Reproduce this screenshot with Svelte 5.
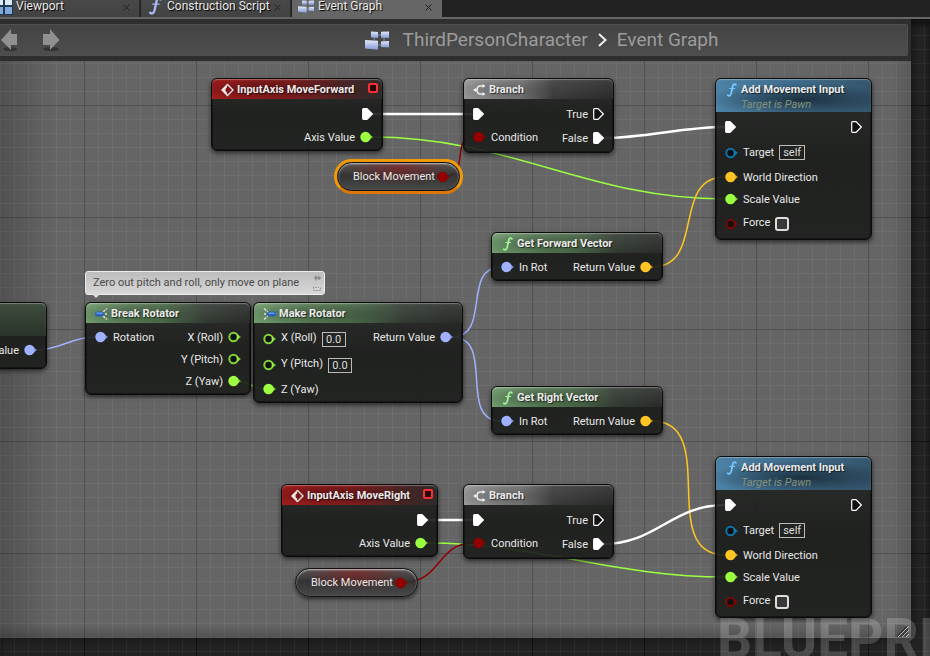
<script lang="ts">
	type PinKind = 'exec' | 'float' | 'rotator' | 'vector' | 'bool' | 'object';

	interface Pin {
		kind: PinKind;
		label?: string;
		linked?: boolean;
		value?: string;
		self?: boolean;
		check?: boolean;
	}

	interface GraphNode {
		id: string;
		title: string;
		subtitle?: string;
		theme: 'event' | 'flow' | 'pure' | 'call';
		icon: 'event' | 'branch' | 'break' | 'make' | 'function' | 'none';
		x: number;
		y: number;
		width: number;
		inputs: Pin[];
		outputs: Pin[];
	}

	interface Wire {
		kind: PinKind;
		from: [number, number];
		to: [number, number];
	}

	const colors: Record<PinKind, string> = {
		exec: '#ffffff',
		float: '#9cff41',
		rotator: '#9fb1ff',
		vector: '#ffc523',
		bool: '#920101',
		object: '#0c87cc',
	};

	const tabs = [
		{ title: 'Viewport', icon: 'viewport' },
		{ title: 'Construction Script', icon: 'function' },
		{ title: 'Event Graph', icon: 'graph' },
	];

	let active = $state('Event Graph');

	const eventNode = (id: string, title: string, x: number, y: number, width: number): GraphNode => ({
		id, title, theme: 'event', icon: 'event', x, y, width,
		inputs: [],
		outputs: [
			{ kind: 'exec', linked: true },
			{ kind: 'float', label: 'Axis Value', linked: true },
		],
	});

	const branchNode = (id: string, x: number, y: number): GraphNode => ({
		id, title: 'Branch', theme: 'flow', icon: 'branch', x, y, width: 151,
		inputs: [
			{ kind: 'exec', linked: true },
			{ kind: 'bool', label: 'Condition', linked: true },
		],
		outputs: [
			{ kind: 'exec', label: 'True' },
			{ kind: 'exec', label: 'False', linked: true },
		],
	});

	const vectorNode = (id: string, title: string, x: number, y: number): GraphNode => ({
		id, title, theme: 'pure', icon: 'function', x, y, width: 172,
		inputs: [{ kind: 'rotator', label: 'In Rot', linked: true }],
		outputs: [{ kind: 'vector', label: 'Return Value', linked: true }],
	});

	const moveNode = (id: string, x: number, y: number): GraphNode => ({
		id, title: 'Add Movement Input', subtitle: 'Target is Pawn', theme: 'call', icon: 'function', x, y, width: 157,
		inputs: [
			{ kind: 'exec', linked: true },
			{ kind: 'object', label: 'Target', self: true },
			{ kind: 'vector', label: 'World Direction', linked: true },
			{ kind: 'float', label: 'Scale Value', linked: true },
			{ kind: 'bool', label: 'Force', check: true },
		],
		outputs: [{ kind: 'exec' }],
	});

	const nodes: GraphNode[] = [
		{
			id: 'yaw', title: '', subtitle: ' ', theme: 'pure', icon: 'none', x: -113, y: 283, width: 160,
			inputs: [],
			outputs: [{ kind: 'rotator', label: 'Return Value', linked: true }],
		},
		eventNode('forward', 'InputAxis MoveForward', 211, 59, 172),
		branchNode('branch-1', 463, 59),
		moveNode('move-1', 715, 59),
		vectorNode('fwd-vector', 'Get Forward Vector', 491, 213),
		{
			id: 'break', title: 'Break Rotator', theme: 'pure', icon: 'break', x: 85, y: 283, width: 166,
			inputs: [{ kind: 'rotator', label: 'Rotation', linked: true }],
			outputs: [
				{ kind: 'float', label: 'X (Roll)' },
				{ kind: 'float', label: 'Y (Pitch)' },
				{ kind: 'float', label: 'Z (Yaw)', linked: true },
			],
		},
		{
			id: 'make', title: 'Make Rotator', theme: 'pure', icon: 'make', x: 253, y: 283, width: 210,
			inputs: [
				{ kind: 'float', label: 'X (Roll)', value: '0.0' },
				{ kind: 'float', label: 'Y (Pitch)', value: '0.0' },
				{ kind: 'float', label: 'Z (Yaw)', linked: true },
			],
			outputs: [{ kind: 'rotator', label: 'Return Value', linked: true }],
		},
		vectorNode('right-vector', 'Get Right Vector', 491, 367),
		eventNode('right', 'InputAxis MoveRight', 281, 465, 157),
		branchNode('branch-2', 463, 465),
		moveNode('move-2', 715, 437),
	];

	const variables = [
		{ id: 'block-1', x: 337, y: 143, selected: true },
		{ id: 'block-2', x: 295, y: 549, selected: false },
	];

	const wires: Wire[] = [
		{ kind: 'exec', from: [373, 95], to: [473, 95] },
		{ kind: 'exec', from: [603, 119], to: [725, 108] },
		{ kind: 'float', from: [372, 118], to: [725, 180] },
		{ kind: 'bool', from: [447, 157], to: [473, 118] },
		{ kind: 'rotator', from: [36, 331], to: [95, 318] },
		{ kind: 'float', from: [240, 363], to: [264, 370] },
		{ kind: 'rotator', from: [452, 318], to: [501, 248] },
		{ kind: 'rotator', from: [452, 318], to: [501, 402] },
		{ kind: 'vector', from: [652, 248], to: [725, 158] },
		{ kind: 'vector', from: [652, 402], to: [725, 536] },
		{ kind: 'exec', from: [427, 501], to: [473, 501] },
		{ kind: 'exec', from: [603, 525], to: [725, 486] },
		{ kind: 'float', from: [427, 524], to: [725, 558] },
		{ kind: 'bool', from: [405, 563], to: [473, 524] },
	];

	// Tangents grow with the distance between both ends
	function wirePath({ from: [x1, y1], to: [x2, y2] }: Wire) {
		const reach = (Math.abs(x2 - x1) + Math.abs(y2 - y1)) / 3;
		return `M${x1} ${y1}C${x1 + reach} ${y1} ${x2 - reach} ${y2} ${x2} ${y2}`;
	}
</script>

{#snippet graphIcon()}
	<svg class="graph-icon" viewBox="0 0 24 19" aria-hidden="true">
		<defs>
			<linearGradient id="graph-fill" x1="0" y1="0" x2="0" y2="1">
				<stop offset="0" stop-color="#e4e9fb" />
				<stop offset="1" stop-color="#8399d6" />
			</linearGradient>
		</defs>
		<path d="M11 4h8M9 9l1-4M13 14h5M19 5v8" stroke="#8b8f9c" fill="none" />
		<g fill="url(#graph-fill)">
			<path d="M6 .5l7 .4v6L6 6.600z" />
			<path d="M16 .8l8-.3v6.500l-8-.2z" />
			<path d="M0 9l13 .8v9L0 17.500z" />
			<path d="M16 10.500l8-.5v6.500l-8-.5z" />
		</g>
	</svg>
{/snippet}

{#snippet functionIcon()}
	<svg class="fn-icon" viewBox="0 0 13 16" aria-hidden="true">
		<path d="M11.500 2.200C10 .5 8.400 1.400 7.800 4L6.200 11.500C5.600 14.200 4 15.400 2.200 14" />
		<path class="thin" d="M4.500 6.300h5.600" />
	</svg>
{/snippet}

{#snippet pinIcon(pin: Pin)}
	{#if pin.kind === 'exec'}
		<svg class="pin exec" viewBox="0 0 11 12" aria-hidden="true">
			<path
				d="M1.500 .7H5L10.300 6L5 11.300H1.500Q.7 11.300 .7 10.500V1.500Q.7 .7 1.500 .7Z"
				fill={pin.linked ? '#fff' : '#111'}
				stroke="#fff"
				stroke-width="1.200"
			/>
		</svg>
	{:else}
		<svg class="pin" viewBox="0 0 13 12" aria-hidden="true">
			<path d="M9 3L13 6L9 9Z" fill={colors[pin.kind]} opacity="0.75" />
			<circle
				cx="5.500"
				cy="6"
				r="4.200"
				fill={pin.linked ? colors[pin.kind] : '#0c0e0c'}
				stroke={colors[pin.kind]}
				stroke-width="2"
				opacity={pin.linked ? 1 : 0.8}
			/>
		</svg>
	{/if}
{/snippet}

<div class="editor">
	<nav class="tabs">
		{#each tabs as tab}
			<div class="tab" class:active={active === tab.title}>
				<button class="tab-main" onclick={() => (active = tab.title)}>
					<span class="tab-icon">
						{#if tab.icon === 'viewport'}
							<svg viewBox="0 0 18 18" aria-hidden="true">
								<path d="M0 0h18v18H0z" fill="#1f3a52" />
								<path d="M1 1h7v7H1zM10 1h7v7h-7z" fill="#dcecf2" />
								<path d="M1 10h7v7H1zM10 10h7v7h-7z" fill="#7fa8dc" />
							</svg>
						{:else if tab.icon === 'function'}
							{@render functionIcon()}
						{:else}
							{@render graphIcon()}
						{/if}
					</span>
					{tab.title}
				</button>
				<button class="close" aria-label="Close {tab.title}">
					<svg viewBox="0 0 7 7" aria-hidden="true"><path d="M.5 .5l6 6M6.500 .5l-6 6" /></svg>
				</button>
			</div>
		{/each}
	</nav>

	<main class="graph">
		<div class="sheet">
			<header class="crumbs">
				<div class="crumb-bar">
					<button class="history" aria-label="Back">
						<svg viewBox="0 0 18 24" aria-hidden="true">
							<ellipse cx="10" cy="21" rx="7" ry="2" fill="#333" />
							<path d="M1 12L11 1V6H17V17H11V22Z" fill="#8e918e" />
						</svg>
					</button>
					<button class="history" aria-label="Forward">
						<svg viewBox="0 0 18 24" aria-hidden="true">
							<ellipse cx="9" cy="21" rx="8" ry="2" fill="#333" />
							<path d="M17.500 12L8 1V6H1V17H8V22Z" fill="#8e918e" />
						</svg>
					</button>
					<div class="path">
						{@render graphIcon()}
						<a href="#character">ThirdPersonCharacter</a>
						<svg class="chevron" viewBox="0 0 9 14" aria-hidden="true"><path d="M1 1L7.500 7L1 13" /></svg>
						<a href="#graph">Event Graph</a>
					</div>
				</div>
			</header>
			<svg class="grip" viewBox="0 0 12 12" aria-hidden="true">
				<path d="M0 12L12 0M4 12L12 4M8 12L12 8" stroke="#333" stroke-width="2" />
				<path d="M1 12L12 1M5 12L12 5M9 12L12 9" stroke="#bbb" />
			</svg>
		</div>

		<svg class="wires" aria-hidden="true">
			{#each wires as wire}
				<path d={wirePath(wire)} stroke={colors[wire.kind]} class:thick={wire.kind === 'exec'} />
			{/each}
		</svg>

		{#each nodes as node (node.id)}
			<section class="node {node.theme}" style="left: {node.x}px; top: {node.y}px; width: {node.width}px;">
				<div class="head" class:tall={node.subtitle}>
					<span class="head-icon">
						{#if node.icon === 'function'}
							{@render functionIcon()}
						{:else if node.icon === 'event'}
							<svg viewBox="0 0 13 14" aria-hidden="true">
								<path d="M6.500 1.500L12 7L6.500 12.500L1 7Z" fill="none" stroke="#f1dede" stroke-width="1.400" />
								<path d="M6 1.500L.5 7L6 12.500V9.800L4.500 8V6L6 4.200Z" fill="#f6eaea" />
							</svg>
						{:else if node.icon === 'branch'}
							<svg viewBox="0 0 13 14" aria-hidden="true">
								<path d="M10 3H7.500Q4 3 4 7T7.500 11H10M1 7h3" fill="none" stroke="#eee" stroke-width="1.500" />
								<path d="M9.500 1l3 2-3 2zM9.500 9l3 2-3 2zM3 5L0 7l3 2z" fill="#eee" />
							</svg>
						{:else if node.icon === 'break'}
							<svg viewBox="0 0 13 14" aria-hidden="true">
								<path d="M8 5l4-3.500M10 7h2M8 9l4 3.500" stroke="#ddd" stroke-width="1.500" stroke-dasharray="3 1" />
								<rect x="0" y="4.500" width="9" height="5" rx="2" fill="#2b62b8" />
								<path d="M1.500 6.200h6" stroke="#86b8ff" />
							</svg>
						{:else if node.icon === 'make'}
							<svg viewBox="0 0 13 14" aria-hidden="true">
								<path d="M1 1.500L5 5M1 7h2M1 12.500L5 9" stroke="#ddd" stroke-width="1.500" stroke-dasharray="3 1" />
								<rect x="4" y="4.500" width="9" height="5" rx="2" fill="#2b62b8" />
								<path d="M5.500 6.200h6" stroke="#86b8ff" />
							</svg>
						{/if}
					</span>
					<div>
						<h2>{node.title}</h2>
						{#if node.subtitle}<p>{node.subtitle}</p>{/if}
					</div>
					{#if node.theme === 'event'}<span class="delegate"></span>{/if}
				</div>
				<div class="body">
					<div class="column">
						{#each node.inputs as pin, i}
							<div class="row" class:exec-row={pin.kind === 'exec'} class:valued={pin.value} class:wide={pin.self || pin.check}>
								{@render pinIcon(pin)}
								{#if pin.value || pin.check}
									<label for="{node.id}-{i}">{pin.label}</label>
								{:else}
									<span class="label">{pin.label}</span>
								{/if}
								{#if pin.value}
									<input class="value" id="{node.id}-{i}" type="text" value={pin.value} />
								{:else if pin.check}
									<input class="check" id="{node.id}-{i}" type="checkbox" />
								{:else if pin.self}
									<span class="self">self</span>
								{/if}
							</div>
						{/each}
					</div>
					<div class="column out">
						{#each node.outputs as pin}
							<div class="row" class:exec-row={pin.kind === 'exec'}>
								<span class="label">{pin.label}</span>
								{@render pinIcon(pin)}
							</div>
						{/each}
					</div>
				</div>
			</section>
		{/each}

		{#each variables as item (item.id)}
			<div class="variable" class:selected={item.selected} style="left: {item.x}px; top: {item.y}px;">
				<span>Block Movement</span>
				{@render pinIcon({ kind: 'bool', linked: true })}
			</div>
		{/each}

		<div class="bubble" style="left: 85px; top: 252px;">
			<span>Zero out pitch and roll, only move on plane</span>
			<svg viewBox="0 0 8 18" aria-hidden="true">
				<path d="M1 4h7M3 1.500v5M6 2v4" stroke="#777" fill="none" />
				<path d="M.5 12.500v4h7v-4M2 13.500h4" stroke="#8d999e" fill="none" stroke-dasharray="2 1" />
			</svg>
		</div>

		<div class="watermark">BLUEPRINT</div>
	</main>
</div>

<style>
	:global(body) {
		margin: 0;
		background: #242424;
	}

	.editor {
		display: flex;
		flex-direction: column;
		height: 100vh;
		overflow: hidden;
		font: 11px/14px Roboto, sans-serif;
		color: #e8e8e8;
	}

	button {
		border: 0;
		padding: 0;
		background: none;
		color: inherit;
		font: inherit;
	}

	svg {
		display: block;
		flex-shrink: 0;
	}

	/* Tabs */
	.tabs {
		display: flex;
		gap: 1px;
		height: 17px;
		margin-left: -10px;
		flex-shrink: 0;
		background: #222;
		border-bottom: 2px solid #666;
		overflow: hidden;
	}

	.tab {
		display: flex;
		align-items: center;
		justify-content: space-between;
		box-sizing: border-box;
		width: 150px;
		height: 24px;
		margin-top: -6px;
		padding: 0 9px 0 6px;
		background: linear-gradient(#4b4b4b, #424242);
		border-right: 1px solid #2c2c2c;
	}

	.tab.active {
		background: #666;
		border-color: #666;
	}

	.tab-main {
		display: flex;
		align-items: center;
		gap: 4px;
		font-size: 12px;
		white-space: nowrap;
		text-shadow: 1px 1px 1px #000;
	}

	.tab-icon {
		display: flex;
		justify-content: center;
		width: 16px;
		color: #a9baf5;
	}

	.tab-icon > svg {
		width: 18px;
		height: 18px;
	}

	.tab-icon .graph-icon {
		width: 16px;
		height: 13px;
	}

	.close svg {
		width: 7px;
		height: 7px;
		margin-top: 2px;
		stroke: #222;
	}

	/* Canvas */
	.graph {
		position: relative;
		display: flex;
		flex: 1;
		overflow: hidden;
		background-color: #242424;
		background-image:
			linear-gradient(#141414 1px, transparent 1px),
			linear-gradient(90deg, #141414 1px, transparent 1px),
			linear-gradient(#2f2f2f 1px, transparent 1px),
			linear-gradient(90deg, #2f2f2f 1px, transparent 1px);
		background-size: 112px 112px, 112px 112px, 14px 14px, 14px 14px;
		background-position: 0 86px, 84px 0, 0 2px, 0 0;
		box-shadow: inset 0 6px 6px #0008;
	}

	.sheet {
		position: relative;
		flex: 1;
		margin: 0 19px 18px 0;
		background-color: #656565;
		background-image:
			linear-gradient(90deg, #0003, transparent 56px),
			linear-gradient(270deg, #0002, transparent 20px),
			linear-gradient(0deg, #0003, transparent 14px),
			linear-gradient(#515151 1px, transparent 1px),
			linear-gradient(90deg, #515151 1px, transparent 1px),
			linear-gradient(#6e6e6e 1px, transparent 1px),
			linear-gradient(90deg, #6e6e6e 1px, transparent 1px);
		background-size: auto, auto, auto, 112px 112px, 112px 112px, 14px 14px, 14px 14px;
		background-position: 0 0, 0 0, 0 0, 0 86px, 84px 0, 0 2px, 0 0;
		box-shadow: 0 0 12px #0009;
	}

	.crumbs {
		padding: 5px 3px 5px 0;
		background: #2b2b2bee;
	}

	.crumb-bar {
		display: flex;
		align-items: center;
		box-sizing: border-box;
		height: 32px;
		gap: 24px;
		background: linear-gradient(#444, #4d4d4d);
		border: 1px solid #505050;
		border-left: 0;
		border-radius: 0 2px 2px 0;
	}

	.history svg {
		width: 18px;
		height: 24px;
	}

	.path {
		display: flex;
		align-items: center;
		justify-content: center;
		flex: 1;
		padding-left: 92px;
		font-size: 19px;
		line-height: 24px;
	}

	.path a {
		color: #9c9c9c;
		text-decoration: none;
	}

	.graph-icon {
		width: 24px;
		height: 19px;
	}

	.path .graph-icon {
		margin-right: 14px;
	}

	.chevron {
		width: 9px;
		height: 14px;
		margin: 0 10px;
		fill: none;
		stroke: #eee;
		stroke-width: 2;
	}

	.grip {
		position: absolute;
		right: 2px;
		bottom: 1px;
		width: 12px;
		height: 12px;
	}

	.wires {
		position: absolute;
		inset: 0;
		width: 100%;
		height: 100%;
		fill: none;
		stroke-width: 1.5;
	}

	.thick {
		stroke-width: 2.5;
	}

	/* Nodes */
	.node {
		position: absolute;
		box-sizing: border-box;
		border: 1px solid #0b0b0b;
		border-radius: 6px;
		background: linear-gradient(#252725e0, #181a18e6 50%, #1b1d1be6);
		box-shadow: 0 2px 5px #0009, inset 0 0 0 1px #0006;
		white-space: nowrap;
	}

	.head {
		display: flex;
		align-items: flex-start;
		gap: 3px;
		box-sizing: border-box;
		height: 20px;
		padding: 4px 4px 0 9px;
		border-radius: 5px 5px 0 0;
		box-shadow: inset 0 1px 1px #ffffff50;
	}

	.head.tall {
		height: 33px;
	}

	.event .head {
		background:
			radial-gradient(ellipse 50% 60% at 32% 50%, #0006, transparent),
			linear-gradient(90deg, #a51d1d, #8a1f20 45%, #4d2324 75%, #2d2a2a);
	}

	.flow .head {
		background:
			linear-gradient(#ffffff18, transparent),
			radial-gradient(ellipse 40% 70% at 25% 50%, #0004, transparent),
			linear-gradient(90deg, #9c9c9c, #777 38%, #3a3a3a 60%, #2a2a2a);
	}

	.pure .head {
		background:
			linear-gradient(#ffffff18, transparent),
			radial-gradient(ellipse 40% 60% at 28% 50%, #0005, transparent),
			linear-gradient(90deg, #6f9c6c, #4b6e49 45%, #323a32 72%, #292b29);
	}

	.pure .head.tall {
		background: linear-gradient(#3d4d3d, #2a332a);
	}

	.pure .head.tall + .body {
		padding-bottom: 7px;
	}

	.call .head {
		background:
			radial-gradient(ellipse 60% 50% at 55% 62%, #101c26bb, transparent),
			linear-gradient(90deg, #4d82a6, #3f6c8b 50%, #35566d);
	}

	.head-icon {
		display: flex;
		align-items: center;
		justify-content: center;
		width: 13px;
		height: 13px;
		flex-shrink: 0;
	}

	.head-icon svg {
		width: 13px;
		height: 14px;
	}

	.fn-icon {
		fill: none;
		stroke: currentColor;
		stroke-width: 2;
		stroke-linecap: round;
	}

	.thin {
		stroke-width: 1.2;
	}

	.pure .head-icon {
		color: #a5f59c;
	}

	.call .head-icon {
		color: #77c8ff;
	}

	h2,
	p {
		margin: 0;
		font-size: 11px;
		line-height: 14px;
	}

	h2 {
		font-weight: 700;
		color: #eaeaea;
		text-shadow: 1px 1px 1px #0009;
	}

	p {
		line-height: 16px;
		font-style: italic;
		color: #84927a;
	}

	.delegate {
		width: 6px;
		height: 6px;
		margin: 0 0 0 auto;
		border: 2px solid #ff2f2f;
		border-radius: 2px;
		background: #240808;
	}

	.body {
		display: flex;
		justify-content: space-between;
		padding: 3px 9px 2px;
	}

	.column {
		display: flex;
		flex-direction: column;
	}

	.row {
		display: flex;
		align-items: center;
		height: 22px;
		gap: 5px;
	}

	.exec-row {
		height: 24px;
	}

	.valued {
		height: 26px;
	}

	.wide {
		height: 27px;
	}

	.label {
		padding-top: 1px;
	}

	.row label {
		padding-bottom: 2px;
	}

	.out .row {
		justify-content: flex-end;
	}

	.pin {
		width: 13px;
		height: 12px;
	}

	.pin.exec {
		width: 11px;
	}

	.value,
	.self {
		box-sizing: border-box;
		height: 15px;
		border: 1px solid #bbb;
		background: none;
		color: #ddd;
		font: inherit;
		line-height: 13px;
		text-align: center;
	}

	.value {
		width: 24px;
		padding: 0;
		border-radius: 0;
	}

	.self {
		width: 26px;
	}

	.check {
		appearance: none;
		box-sizing: border-box;
		width: 14px;
		height: 14px;
		margin: 0;
		border: 2px solid #ddd;
		border-radius: 3px;
		background: #383838;
	}

	.variable {
		position: absolute;
		display: flex;
		align-items: center;
		gap: 2px;
		box-sizing: border-box;
		height: 29px;
		padding: 0 9px 0 15px;
		border: 1px solid #111;
		border-radius: 15px;
		background:
			radial-gradient(ellipse 45% 60% at 50% 20%, #8c1c1c99, transparent),
			linear-gradient(#555d, #2c2c2cdd 45%, #444d);
		box-shadow: 0 2px 4px #0009, inset 0 1px 2px #ffffffaa;
		white-space: nowrap;
	}

	.variable.selected {
		box-shadow: 0 0 0 1px #0008, inset 0 1px 2px #ffffffaa;
	}

	.variable.selected::before {
		content: '';
		position: absolute;
		inset: -4px;
		border: 3px solid #f09a08;
		border-bottom-color: #dc7604;
		border-radius: 18px;
	}

	.bubble {
		position: absolute;
		display: flex;
		align-items: center;
		gap: 14px;
		box-sizing: border-box;
		height: 24px;
		padding: 0 3px 0 7px;
		border: 1px solid #eee;
		border-radius: 3px;
		background: linear-gradient(#bdbdbd, #d8d8d8);
		color: #4a4a4a;
		white-space: nowrap;
	}

	.bubble::after {
		content: '';
		position: absolute;
		left: 6px;
		top: 100%;
		border: 4px solid transparent;
		border-top-color: #ddd;
	}

	.bubble svg {
		width: 8px;
		height: 18px;
	}

	.watermark {
		position: absolute;
		right: -77px;
		bottom: -4px;
		color: #ffffff2e;
		font-size: 55px;
		font-weight: 700;
		line-height: 42px;
		pointer-events: none;
	}
</style>
